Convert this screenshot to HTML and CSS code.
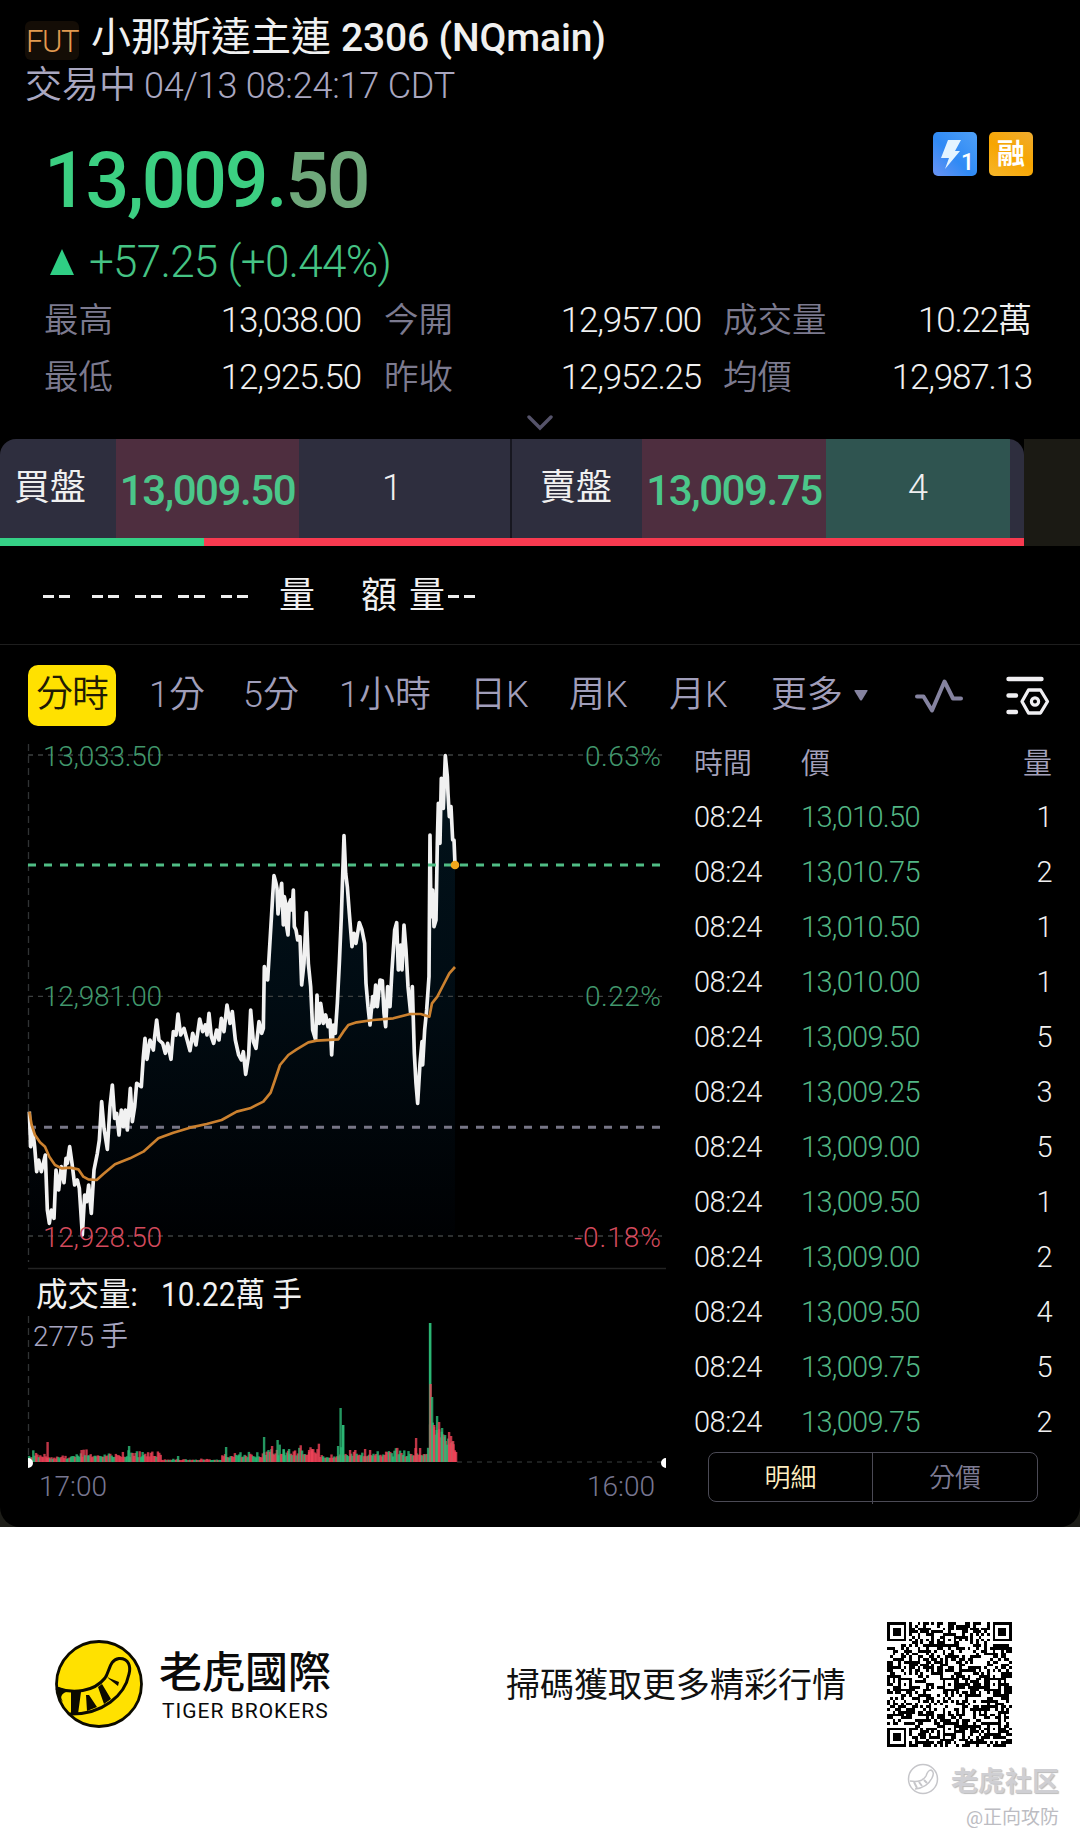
FILE: index.html
```html
<!DOCTYPE html>
<html lang="zh-Hant">
<head>
<meta charset="utf-8">
<title>小那斯達主連 2306</title>
<link rel="stylesheet" href="styles.css">
</head>
<body>
<div class="backdrop">
<main class="quote">
  <header class="head">
    <div class="title"><span class="fut">FUT</span><span class="name-cjk">小那斯達主連</span><span class="name-code">2306 (NQmain)</span></div>
    <div class="status"><span class="status-cjk">交易中</span><span>04/13 08:24:17 CDT</span></div>
  </header>

  <section class="price-row">
    <div class="price">13,009.<span class="cents">50</span></div>
    <div class="badges">
      <svg class="badge" viewBox="0 0 44 44">
        <defs><linearGradient id="blue" x1="0" y1="1" x2="1" y2="0"><stop offset="0" stop-color="#6b93f3"/><stop offset=".45" stop-color="#2f8af5"/><stop offset="1" stop-color="#4f9ff6"/></linearGradient></defs>
        <rect width="44" height="44" rx="5" fill="url(#blue)"/>
        <path d="M15 8H28L22 19H27L12 37L16 26H8Z" fill="#e4f4ff"/>
        <text x="28" y="38" class="badge-one">1</text>
      </svg>
      <div class="badge badge-margin">融</div>
    </div>
  </section>

  <div class="change"><svg class="up" viewBox="0 0 24 26"><path d="M12 0L24 26H0Z" fill="#2fce84"/></svg><span>+57.25 (+0.44%)</span></div>

  <section class="stats">
    <span class="k">最高</span><span class="v">13,038.00</span><span class="k">今開</span><span class="v">12,957.00</span><span class="k">成交量</span><span class="v">10.22<span class="wan">萬</span></span>
    <span class="k">最低</span><span class="v">12,925.50</span><span class="k">昨收</span><span class="v">12,952.25</span><span class="k">均價</span><span class="v">12,987.13</span>
  </section>
  <div class="expand"><svg width="26" height="16" viewBox="0 0 26 16"><path d="M2 2L13 13L24 2" fill="none" stroke="#55536a" stroke-width="3.4" stroke-linecap="round"/></svg></div>

  <section class="book">
    <div class="book-main">
      <div class="book-cells">
        <span class="side">買盤</span><span class="bp">13,009.50</span><span class="qty bid">1</span>
        <span class="side ask-side">賣盤</span><span class="bp">13,009.75</span><span class="qty ask">4</span>
      </div>
      <div class="ratio"><i></i></div>
    </div>
  </section>

  <div class="depth"><i class="dd"></i><i class="dd"></i><i class="dd"></i><i class="dd"></i><i class="dd"></i><span class="d-vol">量</span><span class="d-amt">額</span><span class="d-vol2">量</span><i class="dd"></i></div>

  <nav class="tabs">
    <span class="tab active">分時</span><span class="tab t1">1分</span><span class="tab t2">5分</span><span class="tab t3">1小時</span><span class="tab t4">日K</span><span class="tab t5">周K</span><span class="tab t6">月K</span><span class="tab t7">更多</span>
    <svg class="caret" viewBox="0 0 14 11"><path d="M1 0H13Q14 0 13.500 1L8 10Q7 11 6 10L.5 1Q0 0 1 0Z" fill="#8583a0"/></svg>
    <svg class="pulse" viewBox="0 0 48 34"><path d="M2 17.500H8.500L17 31.500L29.500 2.500L38 19.500H46" fill="none" stroke="#8583a0" stroke-width="4" stroke-linecap="round" stroke-linejoin="round"/></svg>
    <svg class="gear" viewBox="0 0 44 40"><g fill="none" stroke="#f0eff2" stroke-linecap="round" stroke-linejoin="round"><path d="M2.500 3H35.500M2.500 19.500H10M2.500 36H10" stroke-width="4.400"/><path d="M22.500 14H34.500L41.500 25.500L34.500 37H22.500L16 25.500Z" stroke-width="3.300"/><circle cx="29" cy="25.500" r="3.600" stroke-width="3.200"/></g></svg>
  </nav>

  <section class="body">
    <svg class="chart" viewBox="0 730 680 797">
      <defs><linearGradient id="area" x1="0" y1="0" x2="0" y2="1"><stop offset="0" stop-color="#02131c"/><stop offset=".5" stop-color="#010c13"/><stop offset="1" stop-color="#000103"/></linearGradient></defs>
      <g transform="translate(0 730) scale(.33333)">
        <path id="fill" fill="url(#area)"/>
      </g>
      <g fill="none" stroke="#3d4040" stroke-width="1.300" stroke-dasharray="5 5">
        <path d="M28 755H662M28 996.300H662M28 1236H662"/>
        <path d="M28.500 744V1262M28.500 1316V1460" stroke="#303334" stroke-dasharray="7 5"/>
        <path d="M457 1462H664" stroke="#272a2a"/>
      </g>
      <path d="M28 1127.300H661" stroke="#777686" stroke-width="3" stroke-dasharray="8 8"/>
      <path d="M28 1268.500H666" stroke="#232323" stroke-width="1.500"/>
      <g transform="translate(0 730) scale(.33333)" fill="none" stroke-linejoin="round">
        <path id="line" stroke="#f1f1f1" stroke-width="11" d="M88 1145L92 1250L98 1200L104 1250L110 1325L116 1290L124 1325L130 1300L136 1275L142 1440L148 1480L154 1440L162 1465L168 1320L176 1380L184 1310L192 1358L198 1285L202 1300L209 1250L216 1300L224 1365L232 1350L238 1375L247 1515L254 1395L260 1415L266 1365L274 1450L282 1320L292 1270L298 1230L305 1115L312 1195L322 1258L330 1130L337 1065L344 1165L350 1150L357 1215L364 1140L370 1190L376 1140L382 1200L391 1075L397 1175L404 1130L410 1060L424 1070L430 980L435 925L441 988L450 930L460 960L464 920L470 870L477 930L488 940L496 970L503 940L513 988L520 905L528 915L534 852L542 915L552 895L560 925L570 962L578 910L588 945L599 867L608 905L616 885L621 915L627 850L634 920L641 940L650 900L657 930L664 865L672 905L681 825L690 880L697 845L706 930L716 975L724 990L730 965L737 1033L746 975L752 840L760 935L768 955L777 875L785 910L790 895L793 710L803 750L812 600L818 500L822 437L828 460L831 475L834 552L840 500L845 460L850 585L853 500L857 520L860 590L864 615L868 520L872 510L876 540L880 480L883 590L888 600L893 630L900 620L905 765L912 700L919 548L925 700L932 770L938 900L947 930L951 795L954 870L958 880L962 820L965 840L970 880L977 855L984 890L990 870L995 975L1000 885L1006 910L1012 820L1018 700L1024 560L1028 440L1032 317L1037 430L1042 470L1048 550L1056 650L1062 610L1068 640L1078 578L1086 600L1094 640L1098 760L1104 830L1110 885L1118 800L1122 830L1127 765L1132 830L1140 750L1147 752L1152 850L1157 890L1163 770L1170 830L1176 720L1184 600L1190 578L1195 720L1202 645L1206 720L1212 585L1218 660L1224 770L1232 850L1237 770L1243 970L1248 1060L1253 1120L1260 1000L1266 935L1268 1005L1274 900L1280 840L1287 740L1290 315L1293 560L1298 480L1302 590L1308 570L1312 340L1315 220L1320 340L1324 145L1330 235L1336 77L1342 140L1344 190L1348 260L1353 230L1358 330L1362 330L1365 404"/>
        <path id="avg" stroke="#cb812f" stroke-width="8" d="M88 1145L95 1185L105 1215L120 1237L135 1250L148 1280L165 1305L185 1315L210 1313L235 1318L250 1340L265 1348L290 1350L310 1332L345 1303L390 1285L430 1265L475 1225L520 1208L570 1193L620 1182L665 1170L710 1145L750 1135L790 1115L812 1088L825 1050L840 1005L865 975L890 958L925 937L950 932L1015 928L1030 905L1045 885L1070 877L1120 870L1180 865L1230 852L1262 852L1288 860L1296 820L1312 800L1330 765L1348 730L1365 711"/>
      </g>
      <path d="M28 865H661" stroke="#50bd85" stroke-width="3" stroke-dasharray="8 8"/>
      <circle cx="455" cy="865" r="4.300" fill="#f3a71c"/>
      <g class="axis">
        <g fill="#41976c">
          <text x="43" y="766" textLength="119">13,033.50</text><text x="43" y="1006" textLength="119">12,981.00</text>
          <text x="585" y="766" textLength="76">0.63%</text><text x="585" y="1006" textLength="76">0.22%</text>
        </g>
        <g fill="#d34a5c"><text x="43" y="1247" textLength="119">12,928.50</text><text x="574" y="1247" textLength="87">-0.18%</text></g>
        <g fill="#777690"><text x="39" y="1496" textLength="68">17:00</text><text x="587" y="1496" textLength="68">16:00</text></g>
      </g>
      <g class="vol-head">
        <text x="36" y="1306" textLength="102" lengthAdjust="spacingAndGlyphs">成交量:</text><text x="161" y="1306" textLength="141" lengthAdjust="spacingAndGlyphs">10.22萬 手</text>
        <text x="33" y="1346" textLength="95" class="vol-max">2775 手</text>
      </g>
      <g id="bars"></g>
      <path d="M28 1458A5 5 0 0 1 28 1468ZM666 1458A5 5 0 0 0 666 1468Z" fill="#fff"/>
    </svg>

    <aside class="ticks">
      <div class="tick tick-head"><span>時間</span><span>價</span><span>量</span></div>
      <div class="tick"><span>08:24</span><b>13,010.50</b><span>1</span></div>
      <div class="tick"><span>08:24</span><b>13,010.75</b><span>2</span></div>
      <div class="tick"><span>08:24</span><b>13,010.50</b><span>1</span></div>
      <div class="tick"><span>08:24</span><b>13,010.00</b><span>1</span></div>
      <div class="tick"><span>08:24</span><b>13,009.50</b><span>5</span></div>
      <div class="tick"><span>08:24</span><b>13,009.25</b><span>3</span></div>
      <div class="tick"><span>08:24</span><b>13,009.00</b><span>5</span></div>
      <div class="tick"><span>08:24</span><b>13,009.50</b><span>1</span></div>
      <div class="tick"><span>08:24</span><b>13,009.00</b><span>2</span></div>
      <div class="tick"><span>08:24</span><b>13,009.50</b><span>4</span></div>
      <div class="tick"><span>08:24</span><b>13,009.75</b><span>5</span></div>
      <div class="tick"><span>08:24</span><b>13,009.75</b><span>2</span></div>
      <div class="switch"><span class="on">明細</span><span>分價</span></div>
    </aside>
  </section>
</main>
</div>

<footer class="foot">
  <div class="foot-row">
    <svg class="logo" viewBox="0 0 88 88">
      <circle cx="44" cy="44" r="42.500" fill="#ffe100" stroke="#0c0b00" stroke-width="2.800"/>
      <path d="M1 48C18 54 39 52 50 38C55 31 54 20 64 18.500C74 18 76 27 74 34C70 55 48 75 14 74" fill="none" stroke="#0c0b00" stroke-width="3"/>
      <path d="M1 46L13 51L9 53Q4 56 8 62L3 57ZM16 51L26 52L23 74L16 73ZM31 55L34 55L42 67L32 71ZM43 47L47 44L56 59L49 64ZM51 35L54 38L64 42L63 46L54 39Z" fill="#0c0b00"/>
    </svg>
    <div class="brand"><div class="brand-cjk">老虎國際</div><div class="brand-en">TIGER BROKERS</div></div>
    <div class="scan">掃碼獲取更多精彩行情</div>
    <svg class="qr" viewBox="0 0 45 45" shape-rendering="crispEdges"><path id="qr"/></svg>
  </div>
  <div class="mark"><svg width="32" height="32" viewBox="0 0 32 32" fill="none" stroke="#c6c6ca"><circle cx="16" cy="16" r="14.500" stroke-width="1.500"/><path d="M3 18Q15 20 19 13Q21 7 24 7Q28 9 25 15Q20 25 8 26" stroke-width="1.500"/><path d="M7 19L10 25M12 19L15 23M17 17L20 20" stroke-width="2"/></svg><span>老虎社区</span></div>
  <div class="author">@正向攻防</div>
</footer>
<script src="script.js"></script>
</body>
</html>
```
FILE: styles.css
```css
* { box-sizing: border-box; }
body { margin: 0; width: 1080px; height: 1843px; overflow: hidden; background: #fff; font-family: Roboto, "Noto Sans CJK TC", sans-serif; }
.backdrop { background: #1d1d18; height: 1527px; }
.quote { height: 1527px; background: #000; border-radius: 0 0 20px 20px; overflow: hidden; color: #f0f0f0; }
.quote span, .quote b { white-space: nowrap; }

.head { height: 112px; padding: 14px 0 0 25px; }
.title { display: flex; height: 47px; line-height: 47px; }
.fut { width: 54px; height: 39px; margin-top: 7px; border-radius: 6px; background: #140d06; color: #e29a50; font-size: 31px; font-weight: 350; line-height: 42px; text-align: center; letter-spacing: -1.500px; }
.name-cjk { width: 250px; margin-left: 12px; font-size: 40px; }
.name-code { padding-top: 1px; font-size: 39px; font-weight: 500; letter-spacing: -.15px; }
.status { display: flex; height: 50px; line-height: 50px; color: #a9a7c0; font-size: 36px; font-weight: 350; letter-spacing: -.2px; }
.status-cjk { width: 119px; font-size: 37px; letter-spacing: 0; }

.price-row { display: flex; justify-content: space-between; height: 124px; padding: 20px 47px 0 44px; }
.price { height: 94px; padding-top: 2px; line-height: 94px; font-size: 77px; font-weight: 500; letter-spacing: -2.300px; color: #3ccf82; }
.cents { color: #6fa87b; }
.badges { display: flex; gap: 12px; }
.badge { width: 44px; height: 44px; }
.badge-one { font: 500 23px Roboto, sans-serif; fill: #fff; }
.badge-margin { border-radius: 5px; background: linear-gradient(30deg, #f6b62b, #f7a500 50%, #efac30); color: #fff; font-size: 28px; font-weight: 700; line-height: 46px; text-align: center; }

.change { display: flex; align-items: center; height: 50px; padding: 2px 0 0 50px; color: #45c384; font-size: 44px; font-weight: 350; letter-spacing: -.75px; }
.up { width: 24px; height: 26px; margin-right: 15px; }

.stats { display: grid; grid-template-columns: 87px 231px 99px 241px 120px 211px; grid-auto-rows: 57px; height: 125px; padding: 6px 0 0 44px; line-height: 57px; font-size: 35px; font-weight: 350; }
.k { color: #7c7a8f; font-size: 34.500px; }
.v { text-align: right; letter-spacing: -1.200px; }
.wan { font-size: 34px; letter-spacing: 0; }
.stats .v:nth-child(6n+2) { padding-right: 1px; }
.stats .v:nth-child(6n+4), .stats .v:nth-child(6n) { padding-right: 1px; }
.stats .k:nth-child(6n+3) { padding-left: 22px; }
.stats .k:nth-child(6n+5) { padding-left: 21px; }
.expand { height: 28px; padding-top: 4px; text-align: center; line-height: 0; }

.book { height: 107px; background: #1b1a14; }
.book-main { width: 1024px; height: 107px; background: #000; }
.book-cells { display: grid; grid-template-columns: 116px 183px 213px 130px 184px 184px 14px; height: 99px; line-height: 99px; border-radius: 16px 16px 0 0; overflow: hidden; background: #2e2e3e; }
.side { padding-left: 14px; font-size: 36px; }
.ask-side { padding-left: 28px; }
.bp { background: #4e2e3f; color: #4bc68a; font-size: 42px; font-weight: 500; letter-spacing: -1.400px; text-align: center; line-height: 103px; }
.qty { font-size: 36px; font-weight: 350; text-align: center; }
.bid { border-right: 2px solid #171720; padding-right: 25px; }
.ask { background: #2f5450; }
.ratio { height: 8px; background: #f83a50; }
.ratio i { display: block; width: 204px; height: 8px; background: #35d086; }

.depth { display: flex; align-items: center; height: 99px; padding: 2px 0 0 43px; border-bottom: 1px solid #1e1e1e; font-size: 36px; line-height: 96px; }
.dd { width: 27px; height: 3px; margin-right: 16px; background: linear-gradient(90deg, #eee 11px, transparent 11px 16px, #eee 16px); }
.dd:first-child { margin-right: 22px; }
.d-vol { width: 82px; margin-left: 15px; }
.d-amt { width: 48px; }
.d-vol2 { width: 39px; }

.tabs { display: flex; align-items: center; height: 85px; padding: 15px 0 0 28px; color: #a09eba; font-size: 36px; font-weight: 350; line-height: 61px; }
.tab { width: 97px; height: 61px; }
.active { width: 88px; margin-right: 33px; border-radius: 10px; background: #ffe100; color: #211b04; font-size: 37px; line-height: 60px; text-align: center; letter-spacing: -1px; }
.t1 { width: 94px; }
.t2 { width: 96px; }
.t3 { width: 131px; }
.t4 { width: 99px; }
.t5 { width: 100px; }
.t6 { width: 102px; }
.t7 { width: 83px; }
.caret { width: 14px; height: 11px; }
.pulse { width: 48px; height: 34px; margin: 2px 0 0 47px; }
.gear { width: 44px; height: 40px; margin: 2px 0 0 43px; }

.body { display: flex; height: 797px; }
.chart { width: 680px; height: 797px; flex: none; }
.axis { font: 350 28px Roboto, sans-serif; }
.vol-head { font-size: 33px; fill: #f0f0f0; }
.vol-max { font-size: 28px; font-weight: 350; fill: #a7a5c0; }
.ticks { width: 400px; padding: 6px 28px 0 14px; }
.tick { display: grid; grid-template-columns: 107px 1fr 40px; height: 55px; line-height: 55px; font-size: 29px; font-weight: 350; letter-spacing: -.5px; }
.tick span:last-child { text-align: right; }
.tick b { color: #52b584; font-weight: 350; letter-spacing: -.7px; }
.tick-head { color: #a3a1bb; height: 54px; line-height: 57px; letter-spacing: 0; }
.switch { display: grid; grid-template-columns: 1fr 1fr; width: 330px; height: 50px; margin: 2px 0 0 14px; border: 1px solid #4b4a55; border-radius: 8px; color: #7d7b93; font-size: 26px; font-weight: 350; line-height: 51px; text-align: center; }
.switch .on { border-right: 1px solid #4b4a55; color: #ffeec0; }

.foot { height: 316px; }
.foot-row { display: flex; height: 233px; padding: 95px 68px 0 55px; }
.logo { width: 88px; height: 88px; margin-top: 18px; flex: none; }
.brand { width: 345px; flex: none; padding: 19px 0 0 16px; color: #0a0a0a; }
.brand-cjk { height: 64px; font-size: 43px; font-weight: 500; line-height: 64px; }
.brand-en { margin: -7px 0 0 3px; font-size: 21px; line-height: 26px; letter-spacing: 1px; white-space: nowrap; }
.scan { width: 399px; flex: none; padding: 36px 0 0 18px; color: #111; font-size: 34px; line-height: 54px; white-space: nowrap; }
.qr { width: 125px; height: 125px; flex: none; }
.mark { display: flex; justify-content: flex-end; align-items: center; gap: 12px; height: 38px; padding-right: 21px; color: #cfcfd3; font-size: 27px; font-weight: 700; text-shadow: 1px 1px 1px #bbb; }
.author { height: 34px; padding: 3px 21px 0 0; color: #bcbcc2; font-size: 19px; line-height: 34px; text-align: right; }
```
FILE: script.js
```js
function rng(seed) {
  return function () {
    seed = (seed * 1664525 + 1013904223) >>> 0;
    return seed / 4294967296;
  };
}

// close the price line down to the chart floor for the shaded area
document.getElementById('fill').setAttribute('d', document.getElementById('line').getAttribute('d') + 'V1518H88Z');

// volume bars: [x, height, up]
var base = 1462, r = rng(7), bars = [];
function level(x) {
  if (x < 45) return 10;
  if (x < 70) return 6;
  if (x < 162) return 11;
  if (x < 222) return 2.5;
  if (x < 262) return 10;
  if (x < 305) return 16;
  if (x < 320) return 17;
  if (x < 336) return 9;
  if (x < 410) return 13;
  if (x < 430) return 16;
  return 0;
}
for (var x = 29; x < 430; x += 1.4) bars.push([x, 1 + level(x) * (0.25 + 0.75 * r() * r() + 0.1), r() > 0.5]);
for (x = 430; x < 457; x += 1.3) bars.push([x, Math.max(8, 42 - (x - 430) * 0.9 - r() * 10), r() > 0.6]);
bars.push([47.5, 20, 0], [81.5, 12, 0], [129, 16, 1], [142.500, 10, 1], [178, 6, 1], [226, 15, 1], [264, 25, 1],
  [272, 16, 0], [277.500, 22, 1], [283.500, 13, 1], [289, 13, 1], [309, 12, 0], [312, 13, 0], [338, 16, 1],
  [340.500, 54, 1], [343, 37, 1], [343, 37, 1], [350, 12, 0], [365, 13, 0], [370, 12, 0], [416, 24, 0], [420, 14, 0],
  [430, 139, 1], [430, 139, 1], [430.500, 78, 0], [432, 65, 1], [434, 37, 0], [437, 46, 1], [439, 40, 0], [442, 34, 1],
  [445, 27, 1], [449, 30, 0], [451, 26, 0], [453, 21, 0], [455, 10, 0]);
document.getElementById('bars').innerHTML = bars.map(function (b) {
  return '<rect x="' + (b[0] - 1.1) + '" y="' + (base - b[1]) + '" width="2.4" height="' + b[1] + '" fill="' + (b[2] ? '#2dbd78' : '#ef4257') + '" opacity=".8"/>';
}).join('');

// 45x45 code: finder and alignment patterns over a module field
var n = 45, q = rng(2306), d = '';
function ring(cx, cy, x, y) { return Math.max(Math.abs(x - cx), Math.abs(y - cy)); }
var finders = [[3, 3], [41, 3], [3, 41]];
var aligns = [[22, 6], [6, 22], [22, 22], [38, 22], [22, 38], [38, 38]];
for (var y = 0; y < n; y++) for (x = 0; x < n; x++) {
  var on = q() > 0.49;
  if (x === 6) on = y % 2 === 0;
  if (y === 6) on = x % 2 === 0;
  aligns.forEach(function (a) { var k = ring(a[0], a[1], x, y); if (k <= 2) on = k !== 1; });
  finders.forEach(function (f) { var k = ring(f[0], f[1], x, y); if (k <= 4) on = k !== 2 && k !== 4; });
  if (on) d += 'M' + x + ' ' + y + 'h1v1h-1z';
}
document.getElementById('qr').setAttribute('d', d);
```
